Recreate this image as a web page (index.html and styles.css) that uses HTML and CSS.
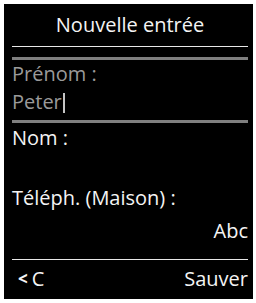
FILE: index.html
```html
<!DOCTYPE html>
<html lang="fr">
<head>
  <meta charset="UTF-8">
  <title>Nouvelle entrée</title>
  <link rel="stylesheet" href="styles.css">
</head>
<body>

<div class="screen">
  <div class="title">Nouvelle entrée</div>
  <div class="rule-white"></div>
  <div class="field active">
    <div class="label">Prénom :</div>
    <div class="value">Peter<span class="cursor"></span></div>
  </div>
  <div class="field">
    <div class="label name">Nom :</div>
    <div class="value empty"></div>
  </div>
  <div class="field">
    <div class="label phone">Téléph. (Maison) :</div>
  </div>
  <div class="mode">Abc</div>
  <div class="footer">
    <span class="back"><span class="arrow">&lt;</span>C</span>
    <span class="save">Sauver</span>
  </div>
</div>

</body>
</html>
```

FILE: styles.css
```css
body {
  margin: 0;
  background-color: #ffffff;
  font-family: "Open Sans", sans-serif;
}
.screen {
  margin: 4px;
  width: 249px;
  height: 295px;
  box-sizing: border-box;
  background-color: #000000;
  color: #f4f4f4;
  padding: 0 5px 0 8px;
  font-size: 20px;
  display: flex;
  flex-direction: column;
}
.title {
  height: 42px;
  line-height: 41px;
  text-align: center;
}
.rule-white {
  height: 1px;
  background-color: #e8e8e8;
  margin-bottom: 10px;
}
.field.active {
  border-top: 3px solid #7f7f7f;
  border-bottom: 3px solid #7f7f7f;
  color: #9a9a9a;
}
.field.active .label {
  line-height: 27px;
}
.field.active .value {
  line-height: 30px;
  margin-bottom: 3px;
}
.cursor {
  display: inline-block;
  width: 2px;
  height: 20px;
  margin-left: 1px;
  background-color: #c4c4c4;
  vertical-align: -4px;
}
.label.name,
.label.phone,
.value.empty {
  line-height: 30px;
  height: 30px;
}
.mode {
  line-height: 35px;
  text-align: right;
}
.footer {
  margin-top: 11px;
  border-top: 1px solid #e8e8e8;
  line-height: 37px;
  display: flex;
  justify-content: space-between;
}
.back {
  padding-left: 6px;
}
.arrow {
  font-size: 17px;
  font-weight: bold;
  margin-right: 4px;
  vertical-align: 1px;
}
```
